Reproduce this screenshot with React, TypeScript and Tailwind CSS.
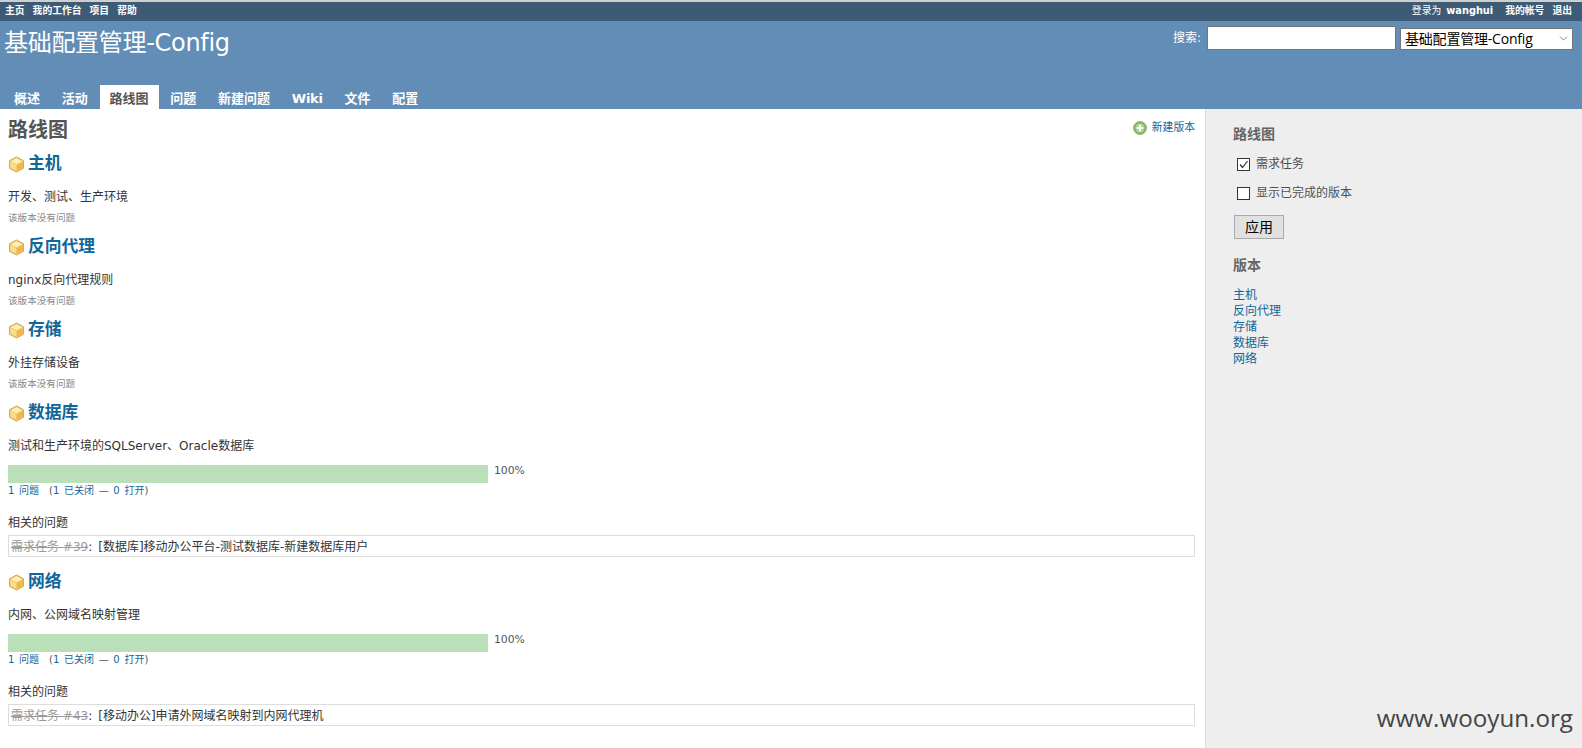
import { ChevronDown } from 'lucide-react'

const FONT = "font-['DejaVu_Sans','Noto_Sans_CJK_SC',sans-serif]"

const versions = [
  { name: '主机', desc: '开发、测试、生产环境' },
  { name: '反向代理', desc: 'nginx反向代理规则' },
  { name: '存储', desc: '外挂存储设备' },
  { name: '数据库', desc: '测试和生产环境的SQLServer、Oracle数据库', issue: { id: '#39', title: '[数据库]移动办公平台-测试数据库-新建数据库用户' } },
  { name: '网络', desc: '内网、公网域名映射管理', issue: { id: '#43', title: '[移动办公]申请外网域名映射到内网代理机' } },
]

const tabs = ['概述', '活动', '路线图', '问题', '新建问题', 'Wiki', '文件', '配置']

const PackageIcon = () => (
  <svg width="17" height="17" viewBox="0 0 17 17" className="shrink-0">
    <path d="M8.5 1 15.5 4.7V12.3L8.5 16 1.5 12.3V4.7Z" fill="#f4c968" stroke="#d9a550" strokeWidth="1" />
    <path d="M8.5 2.2 14.2 5.2 8.5 8.2 2.8 5.2Z" fill="#fdeeb8" />
    <path d="M2.5 6 8 8.9V14.6L2.5 11.7Z" fill="#f9dc8e" />
    <path d="M9 8.9 14.5 6V11.7L9 14.6Z" fill="#eeb64c" />
  </svg>
)

const AddIcon = () => (
  <svg width="14" height="14" viewBox="0 0 14 14">
    <circle cx="7" cy="7" r="6.5" fill="#7cb961" stroke="#8fbf7a" />
    <circle cx="7" cy="7" r="4.6" fill="#a6d48f" />
    <path d="M7 3.6V10.4M3.6 7H10.4" stroke="#fff" strokeWidth="2.2" />
  </svg>
)

const Version = ({ name, desc, issue }: (typeof versions)[number]) => (
  <section>
    <h3 className="flex items-center gap-[3px] h-[22px] text-[16.8px] font-bold text-[#116699]">
      <PackageIcon />
      <a>{name}</a>
    </h3>
    <p className="mt-[14px] text-[12px] leading-[16px] text-[#333]">{desc}</p>
    {issue ? (
      <>
        <div className="mt-[11px] flex items-start gap-[6px]">
          <div className="w-[480px] h-[18px] bg-[#bae0ba]"></div>
          <span className="text-[10.8px] leading-[12px] text-[#555]">100%</span>
        </div>
        <p className="mt-[2px] text-[10px] leading-[12px] text-[#555] [word-spacing:1.5px]">
          <a className="text-[#116699]">1 问题</a>
          <span className="ml-[10px]">(</span>
          <a className="text-[#116699]">1 已关闭</a> — <a className="text-[#116699]">0 打开</a>)
        </p>
        <p className="mt-[18px] text-[12px] leading-[16px] text-[#333]">相关的问题</p>
        <div className="mt-[4px] mb-[14px] h-[22px] border border-[#dddddd] px-[2px] pt-[2px] flex items-center text-[12px] text-[#333]">
          <a className="line-through text-[#999]">需求任务 {issue.id}</a>
          <span>:</span>
          <span className="ml-[6px]">{issue.title}</span>
        </div>
      </>
    ) : (
      <p className="mt-[6px] mb-[12px] text-[9.6px] leading-[13px] text-[#888]">该版本没有问题</p>
    )}
  </section>
)

export default function App() {
  return (
    <div className={`relative min-h-[748px] bg-white ${FONT}`}>
      <div className="h-[2px] bg-[#cfcfcf]"></div>
      <div className="h-[19px] bg-[#3e5b76] px-[5px] flex items-center justify-between text-[9.8px] font-bold text-white">
        <div className="flex gap-[8px]">
          <a>主页</a>
          <a>我的工作台</a>
          <a>项目</a>
          <a>帮助</a>
        </div>
        <div className="flex gap-[8px] pr-[5px]">
          <span className="mr-[4px] font-normal">登录为<b className="ml-[5px]">wanghui</b></span>
          <a>我的帐号</a>
          <a>退出</a>
        </div>
      </div>

      <header className="h-[88px] bg-[#628db6] flex flex-col justify-between text-white">
        <div className="flex justify-between">
          <h1 className="pl-[4px] pt-[6px] text-[24px] leading-[32px] tracking-[-0.3px]">基础配置管理-Config</h1>
          <div className="flex items-start gap-[4px] pt-[5px] pr-[9px]">
            <span className="mr-[2px] text-[12px] leading-[24px]">搜索:</span>
            <input className="w-[189px] h-[24px] bg-white border border-[#767676]" />
            <div className="relative mt-[1px]">
              <select className="appearance-none w-[173px] h-[22px] bg-white border border-[#767676] pl-[4px] text-[14px] leading-[20px] tracking-[-0.2px] text-black font-['Open_Sans','Noto_Sans_CJK_SC',sans-serif]">
                <option>基础配置管理-Config</option>
              </select>
              <ChevronDown size={13} strokeWidth={1.2} className="absolute right-[3px] top-[5px] text-[#444] pointer-events-none" />
            </div>
          </div>
        </div>
        <nav className="flex gap-[1.75px] pl-[4px] h-[24px]">
          {tabs.map((t) => (
            <a
              key={t}
              className={`px-[10px] text-[13px] leading-[27px] font-bold ${t === '路线图' ? 'bg-white text-[#555]' : 'text-white'} ${t === 'Wiki' ? 'tracking-[-0.25px]' : ''}`}
            >
              {t}
            </a>
          ))}
        </nav>
      </header>

      <div className="flex min-h-[639px]">
        <main className="flex-1 pl-[8px] pr-[10px] pt-[8px]">
          <div className="flex justify-between items-start h-[36px]">
            <h2 className="text-[20px] leading-[26px] font-bold text-[#555]">路线图</h2>
            <a className="flex items-center gap-[5px] mt-[4px] text-[10.8px] leading-[14px] text-[#116699]">
              <AddIcon />
              新建版本
            </a>
          </div>
          {versions.map((v) => (
            <Version key={v.name} {...v} />
          ))}
        </main>

        <aside className="w-[377px] shrink-0 bg-[#eeeeee] border-l border-[#dddddd] pl-[27px] pt-[16px]">
          <h3 className="text-[14px] leading-[18px] font-bold text-[#666]">路线图</h3>
          <label className="mt-[13px] ml-[4px] flex items-center gap-[6px] h-[16px] text-[12px] text-[#505050]">
            <span className="w-[13px] h-[13px] border border-[#333] bg-white flex items-center justify-center">
              <svg width="11" height="11" viewBox="0 0 11 11">
                <path d="M2 5.5 4.5 8.5 9.5 2" fill="none" stroke="#333" strokeWidth="1.2" />
              </svg>
            </span>
            需求任务
          </label>
          <label className="mt-[13px] ml-[4px] flex items-center gap-[6px] h-[16px] text-[12px] text-[#505050]">
            <span className="w-[13px] h-[13px] border border-[#333] bg-white"></span>
            显示已完成的版本
          </label>
          <button className="block mt-[14px] ml-[1px] w-[50px] h-[24px] border border-[#aaaaaa] bg-[#e1e1e1] text-[14px] text-black">
            应用
          </button>
          <h3 className="mt-[17px] text-[14px] leading-[18px] font-bold text-[#666]">版本</h3>
          <ul className="mt-[13px] text-[12px] leading-[16px] text-[#116699]">
            {versions.map((v) => (
              <li key={v.name}><a>{v.name}</a></li>
            ))}
          </ul>
        </aside>
      </div>

      <div className="absolute right-[9px] bottom-[14px] text-[24.2px] leading-[32px] text-[#444] font-['Open_Sans',sans-serif]">
        www.wooyun.org
      </div>
    </div>
  )
}
